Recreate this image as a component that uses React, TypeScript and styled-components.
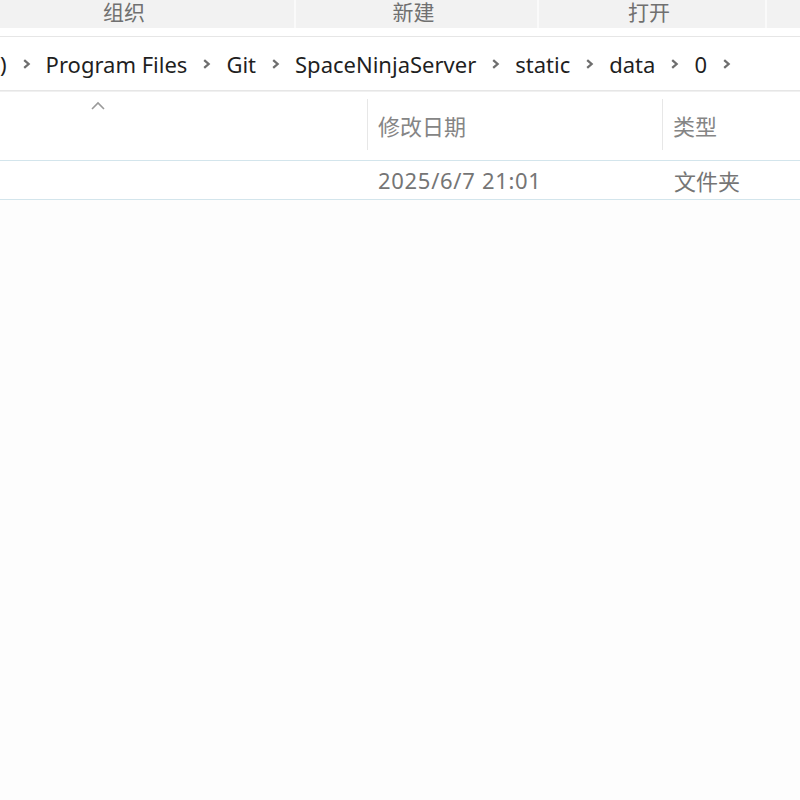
import React from 'react';
import styled, { createGlobalStyle } from 'styled-components';

const GlobalStyle = createGlobalStyle`
  html, body {
    margin: 0;
    padding: 0;
    background: #fdfdfd;
    overflow: hidden;
  }
  body {
    font-family: "Noto Sans", "Noto Sans CJK SC", sans-serif;
  }
`;

const Page = styled.div`
  width: 800px;
  height: 800px;
  background: #fdfdfd;
  overflow: hidden;
`;

const Toolbar = styled.div`
  display: flex;
  height: 28px;
  background: #f2f2f2;
  overflow: hidden;
`;

const ToolButton = styled.div<{ $w: number; $shift?: number }>`
  flex: 0 0 ${p => p.$w}px;
  box-sizing: border-box;
  margin-left: ${p => p.$shift ?? 0}px;
  display: flex;
  justify-content: center;
  align-items: flex-start;
  border-right: 2px solid #fafafa;
  padding: 1px 6px 0 0;
  color: #707070;
  font-family: "Noto Sans CJK SC", sans-serif;
  font-size: 21px;
  line-height: 21px;
`;

const Spacer = styled.div`
  height: 8px;
  background: #ffffff;
  border-bottom: 1px solid #e6e6e6;
`;

const AddressBar = styled.div`
  height: 53px;
  display: flex;
  align-items: center;
  gap: 15px;
  background: #ffffff;
  border-bottom: 1px solid #e6e6e6;
  color: #1f1f1f;
  font-size: 22px;
  white-space: nowrap;
`;

const Crumb = styled.span`
  line-height: 26px;
`;

const Chevron = () => (
  <svg width="9" height="12" viewBox="0 0 9 12">
    <path d="M2.2 2.2 L6.6 6 L2.2 9.8" fill="none" stroke="#6e6e6e" strokeWidth="2.3" />
  </svg>
);

const Header = styled.div`
  height: 68px;
  display: flex;
  background: #ffffff;
  border-top: 1px solid #f0f0f0;
  border-bottom: 1px solid #d3e5ec;
`;

const NameHead = styled.div`
  flex: 0 0 367px;
  display: flex;
  justify-content: center;
  padding-right: 172px;
  box-sizing: border-box;
  padding-top: 9px;
`;

const HeadCell = styled.div<{ $w: number }>`
  flex: 0 0 ${p => p.$w}px;
  box-sizing: border-box;
  border-left: 1px solid #e7e7e7;
  margin: 7px 0 10px;
  padding-left: 10px;
  display: flex;
  align-items: center;
  color: #858585;
  font-family: "Noto Sans CJK SC", sans-serif;
  font-size: 22px;
`;

const Row = styled.div`
  height: 38px;
  display: flex;
  align-items: center;
  background: #ffffff;
  border-bottom: 1px solid #d3e5ec;
  color: #757575;
  font-size: 22px;
`;

const RowCell = styled.div<{ $w: number; $pad: number; $cjk?: boolean }>`
  flex: 0 0 ${p => p.$w}px;
  box-sizing: border-box;
  padding-left: ${p => p.$pad}px;
  letter-spacing: ${p => (p.$cjk ? 0 : 0.7)}px;
  font-family: ${p => (p.$cjk ? '"Noto Sans CJK SC", sans-serif' : '"Noto Sans", sans-serif')};
`;

const crumbs = ['Program Files', 'Git', 'SpaceNinjaServer', 'static', 'data', '0'];

export default function App() {
  return (
    <Page>
      <GlobalStyle />
      <Toolbar>
        <ToolButton $w={336} $shift={-40}>组织</ToolButton>
        <ToolButton $w={243}>新建</ToolButton>
        <ToolButton $w={228}>打开</ToolButton>
        <ToolButton $w={100} />
      </Toolbar>
      <Spacer />
      <AddressBar>
        <Crumb>)</Crumb>
        {crumbs.map(c => (
          <React.Fragment key={c}>
            <Chevron />
            <Crumb>{c}</Crumb>
          </React.Fragment>
        ))}
        <Chevron />
      </AddressBar>
      <Header>
        <NameHead>
          <svg width="16" height="10" viewBox="0 0 16 10">
            <path d="M2 8 L8 2 L14 8" fill="none" stroke="#9a9a9a" strokeWidth="1.6" />
          </svg>
        </NameHead>
        <HeadCell $w={295}>修改日期</HeadCell>
        <HeadCell $w={138}>类型</HeadCell>
      </Header>
      <Row>
        <RowCell $w={367} $pad={0} />
        <RowCell $w={295} $pad={11}>2025/6/7 21:01</RowCell>
        <RowCell $w={138} $pad={12} $cjk>文件夹</RowCell>
      </Row>
    </Page>
  );
}
